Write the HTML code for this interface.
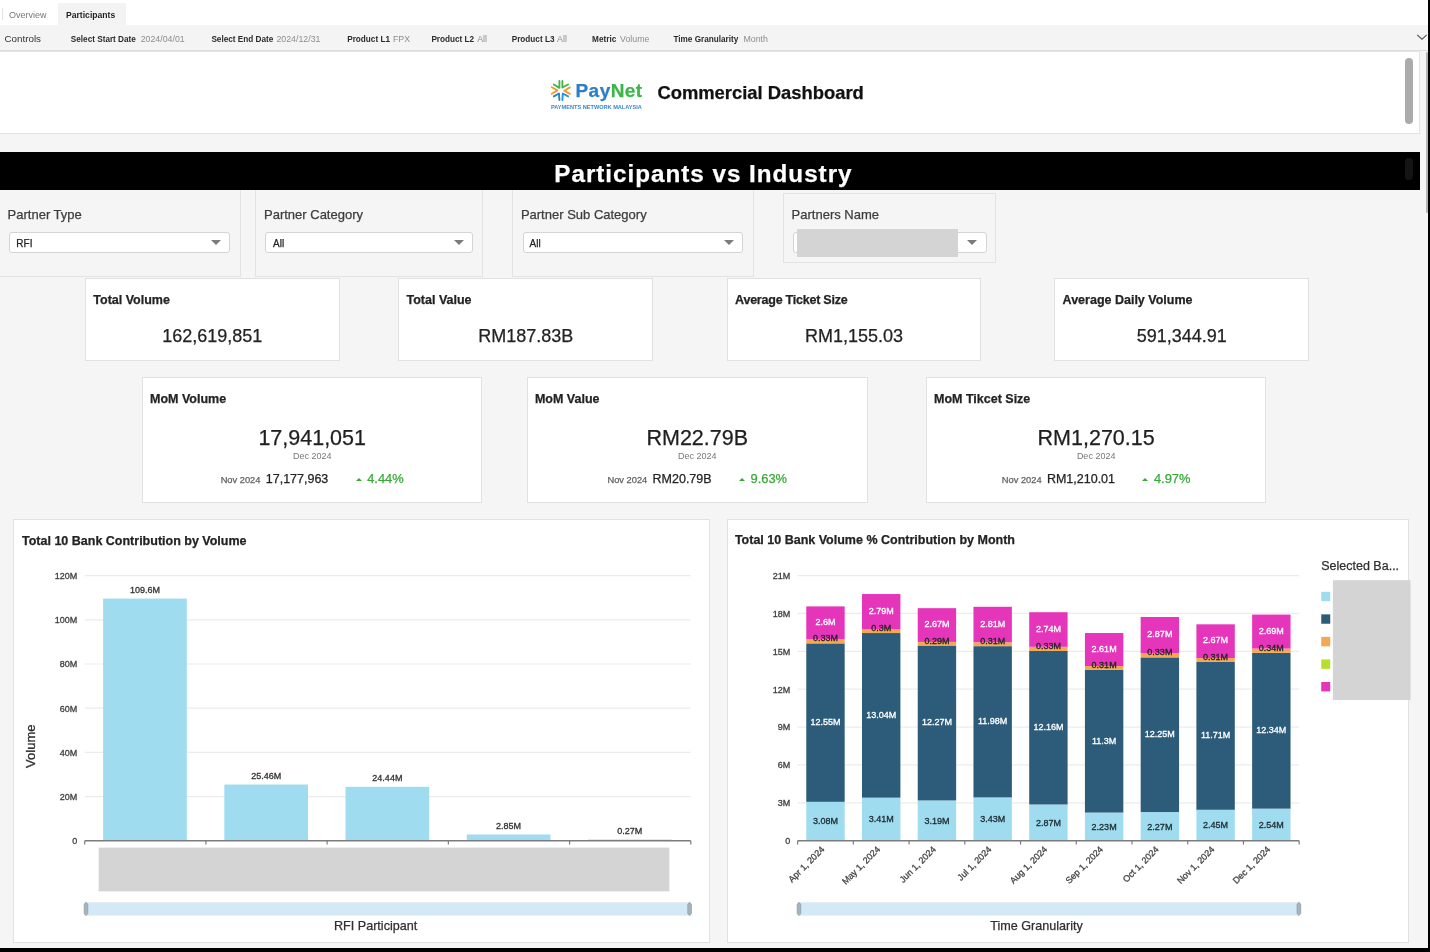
<!DOCTYPE html>
<html><head><meta charset="utf-8">
<style>
*{box-sizing:border-box;margin:0;padding:0}
html,body{width:1430px;height:952px;overflow:hidden;background:#000}
body{font-family:"Liberation Sans",sans-serif;color:#16191f;position:relative}
.a{position:absolute}
.t{white-space:nowrap;-webkit-text-stroke:0.25px currentColor}
.ns{-webkit-text-stroke:0}
#page{position:absolute;left:0;top:0;width:1428px;height:948px;background:#f5f5f5;overflow:hidden;will-change:transform}
.card{background:#fff;border:1px solid #e1e1e1}
.fp{background:#f5f5f5;border:1px solid #e3e3e3}
.dd{background:#fff;border:1px solid #d2d2d2;border-radius:3px}
</style></head><body>
<div id="page">

<div class="a" style="left:0.00px;top:0.00px;width:1428.00px;height:25.00px;background:#fff"></div>
<div class="a" style="left:2.00px;top:8.00px;width:1.00px;height:12.00px;background:#e4e4e4"></div>
<div class="a t ns" style="left:9.00px;top:10.68px;font-size:9px;line-height:9px;font-weight:400;color:#777;">Overview</div>
<div class="a" style="left:58.00px;top:3.00px;width:68.00px;height:22.00px;background:#f3f3f3"></div>
<div class="a t ns" style="left:66.00px;top:11.02px;font-size:8.6px;line-height:8.6px;font-weight:700;color:#1f1f1f;">Participants</div>
<div class="a" style="left:0.00px;top:25.00px;width:1428.00px;height:26.00px;background:#f4f4f4;border-bottom:1px solid #dedede"></div>
<div class="a t ns" style="left:4.50px;top:33.80px;font-size:9.8px;line-height:9.8px;font-weight:400;color:#333;">Controls</div>
<div class="a t ns" style="left:70.80px;top:36.06px;font-size:8.2px;line-height:8.2px;font-weight:700;color:#2a2a2a;">Select Start Date</div>
<div class="a t ns" style="left:140.70px;top:34.75px;font-size:8.8px;line-height:8.8px;font-weight:400;color:#8d8d8d;">2024/04/01</div>
<div class="a t ns" style="left:211.40px;top:36.06px;font-size:8.2px;line-height:8.2px;font-weight:700;color:#2a2a2a;">Select End Date</div>
<div class="a t ns" style="left:276.40px;top:34.75px;font-size:8.8px;line-height:8.8px;font-weight:400;color:#8d8d8d;">2024/12/31</div>
<div class="a t ns" style="left:347.20px;top:36.06px;font-size:8.2px;line-height:8.2px;font-weight:700;color:#2a2a2a;">Product L1</div>
<div class="a t ns" style="left:393.00px;top:34.75px;font-size:8.8px;line-height:8.8px;font-weight:400;color:#8d8d8d;">FPX</div>
<div class="a t ns" style="left:431.40px;top:36.06px;font-size:8.2px;line-height:8.2px;font-weight:700;color:#2a2a2a;">Product L2</div>
<div class="a t ns" style="left:477.20px;top:34.75px;font-size:8.8px;line-height:8.8px;font-weight:400;color:#8d8d8d;">All</div>
<div class="a t ns" style="left:511.70px;top:36.06px;font-size:8.2px;line-height:8.2px;font-weight:700;color:#2a2a2a;">Product L3</div>
<div class="a t ns" style="left:557.10px;top:34.75px;font-size:8.8px;line-height:8.8px;font-weight:400;color:#8d8d8d;">All</div>
<div class="a t ns" style="left:592.10px;top:36.06px;font-size:8.2px;line-height:8.2px;font-weight:700;color:#2a2a2a;">Metric</div>
<div class="a t ns" style="left:620.10px;top:34.75px;font-size:8.8px;line-height:8.8px;font-weight:400;color:#8d8d8d;">Volume</div>
<div class="a t ns" style="left:673.40px;top:36.06px;font-size:8.2px;line-height:8.2px;font-weight:700;color:#2a2a2a;">Time Granularity</div>
<div class="a t ns" style="left:743.50px;top:34.75px;font-size:8.8px;line-height:8.8px;font-weight:400;color:#8d8d8d;">Month</div>
<svg class="a" style="left:1415.5px;top:33px" width="12" height="8" viewBox="0 0 12 8"><path d="M1.2 1.8 L6 6.2 L10.8 1.8" fill="none" stroke="#555" stroke-width="1.1"/></svg>
<div class="a" style="left:-2.00px;top:51.00px;width:1421.50px;height:83.00px;background:#fff;border:1px solid #e3e3e3"></div>
<div class="a" style="left:1405.00px;top:58.30px;width:7.70px;height:65.80px;background:#ababab;border-radius:4px"></div>
<svg class="a" style="left:547px;top:77px" width="28" height="26" viewBox="0 0 28 26" fill="none" stroke-width="1.9" stroke-linecap="round" stroke-linejoin="round"><polyline points="12.4,4 12.4,10.9 6.8,7.5" stroke="#45b549"/><polyline points="15.4,4 15.4,10.5 21.1,7.5" stroke="#45b549"/><polyline points="4.8,10.2 10.4,13.4 4.8,16.7" stroke="#f39a2c"/><polyline points="22.9,10.4 17.3,13.7 22.9,16.8" stroke="#f39a2c"/><polyline points="6.8,19.4 12,16.5 12.4,23" stroke="#2782c8"/><polyline points="15.4,23 15.8,16.5 21.1,19.4" stroke="#2d95d0"/></svg>
<div class="a t" style="left:575.50px;top:80.82px;font-size:19px;line-height:19px;font-weight:700;color:#222;letter-spacing:0.45px"><span style="color:#2c7ec8">Pay</span><span style="color:#3db54a">Net</span></div>
<div class="a t ns" style="left:551.00px;top:104.56px;font-size:5.6px;line-height:5.6px;font-weight:700;color:#3b86cc;">PAYMENTS NETWORK MALAYSIA</div>
<div class="a t" style="left:657.40px;top:83.82px;font-size:18.4px;line-height:18.4px;font-weight:700;color:#111;">Commercial Dashboard</div>
<div class="a" style="left:0.00px;top:151.50px;width:1419.50px;height:38.80px;background:#000"></div>
<div class="a" style="left:1405.00px;top:158.00px;width:7.50px;height:22.00px;background:#141414;border-radius:4px"></div>
<div class="a t" style="left:554.30px;top:162.01px;font-size:24.2px;line-height:24.2px;font-weight:700;color:#fff;letter-spacing:1px">Participants vs Industry</div>
<div class="a" style="left:-2.00px;top:190.00px;width:243.00px;height:87.00px;background:#f5f5f5;border:1px solid #e3e3e3;border-top:none"></div>
<div class="a" style="left:255.00px;top:190.00px;width:228.00px;height:87.00px;background:#f5f5f5;border:1px solid #e3e3e3;border-top:none"></div>
<div class="a" style="left:512.00px;top:190.00px;width:242.00px;height:87.00px;background:#f5f5f5;border:1px solid #e3e3e3;border-top:none"></div>
<div class="a" style="left:783.00px;top:192.50px;width:213.00px;height:70.50px;background:#f5f5f5;border:1px solid #e3e3e3"></div>
<div class="a t" style="left:7.60px;top:208.00px;font-size:13px;line-height:13px;font-weight:400;color:#3d3d3d;">Partner Type</div>
<div class="a" style="left:9.20px;top:232.00px;width:221.30px;height:21.00px;background:#fff;border:1px solid #d4d4d4;border-radius:3px"></div>
<div class="a t" style="left:16.30px;top:238.63px;font-size:10px;line-height:10px;font-weight:400;color:#222;">RFI</div>
<div class="a" style="left:211.00px;top:239.80px;width:0;height:0;border-left:5px solid transparent;border-right:5px solid transparent;border-top:5px solid #7b7b7b"></div>
<div class="a t" style="left:264.00px;top:208.00px;font-size:13px;line-height:13px;font-weight:400;color:#3d3d3d;">Partner Category</div>
<div class="a" style="left:265.00px;top:232.00px;width:208.00px;height:21.00px;background:#fff;border:1px solid #d4d4d4;border-radius:3px"></div>
<div class="a t" style="left:273.00px;top:238.63px;font-size:10px;line-height:10px;font-weight:400;color:#222;">All</div>
<div class="a" style="left:453.50px;top:239.80px;width:0;height:0;border-left:5px solid transparent;border-right:5px solid transparent;border-top:5px solid #7b7b7b"></div>
<div class="a t" style="left:520.90px;top:208.00px;font-size:13px;line-height:13px;font-weight:400;color:#3d3d3d;">Partner Sub Category</div>
<div class="a" style="left:522.70px;top:232.00px;width:220.80px;height:21.00px;background:#fff;border:1px solid #d4d4d4;border-radius:3px"></div>
<div class="a t" style="left:529.60px;top:238.63px;font-size:10px;line-height:10px;font-weight:400;color:#222;">All</div>
<div class="a" style="left:724.00px;top:239.80px;width:0;height:0;border-left:5px solid transparent;border-right:5px solid transparent;border-top:5px solid #7b7b7b"></div>
<div class="a t" style="left:791.60px;top:208.00px;font-size:13px;line-height:13px;font-weight:400;color:#3d3d3d;">Partners Name</div>
<div class="a" style="left:793.00px;top:232.00px;width:193.50px;height:21.00px;background:#fff;border:1px solid #d4d4d4;border-radius:3px"></div>
<div class="a" style="left:797.00px;top:228.50px;width:160.80px;height:28.40px;background:#d4d4d4"></div>
<div class="a" style="left:967.00px;top:239.80px;width:0;height:0;border-left:5px solid transparent;border-right:5px solid transparent;border-top:5px solid #7b7b7b"></div>
<div class="a" style="left:85.00px;top:278.20px;width:254.50px;height:82.90px;background:#fff;border:1px solid #e1e1e1"></div>
<div class="a t" style="left:93.30px;top:293.72px;font-size:12.5px;line-height:12.5px;font-weight:700;color:#232323;">Total Volume</div>
<div class="a t" style="left:-187.75px;width:800px;text-align:center;top:327.26px;font-size:18px;line-height:18px;font-weight:400;color:#232323;">162,619,851</div>
<div class="a" style="left:398.20px;top:278.20px;width:255.00px;height:82.90px;background:#fff;border:1px solid #e1e1e1"></div>
<div class="a t" style="left:406.50px;top:293.72px;font-size:12.5px;line-height:12.5px;font-weight:700;color:#232323;">Total Value</div>
<div class="a t" style="left:125.70px;width:800px;text-align:center;top:327.26px;font-size:18px;line-height:18px;font-weight:400;color:#232323;">RM187.83B</div>
<div class="a" style="left:726.80px;top:278.20px;width:254.40px;height:82.90px;background:#fff;border:1px solid #e1e1e1"></div>
<div class="a t" style="left:735.10px;top:293.72px;font-size:12.5px;line-height:12.5px;font-weight:700;color:#232323;letter-spacing:-0.23px">Average Ticket Size</div>
<div class="a t" style="left:454.00px;width:800px;text-align:center;top:327.26px;font-size:18px;line-height:18px;font-weight:400;color:#232323;">RM1,155.03</div>
<div class="a" style="left:1054.30px;top:278.20px;width:255.10px;height:82.90px;background:#fff;border:1px solid #e1e1e1"></div>
<div class="a t" style="left:1062.60px;top:293.72px;font-size:12.5px;line-height:12.5px;font-weight:700;color:#232323;">Average Daily Volume</div>
<div class="a t" style="left:781.85px;width:800px;text-align:center;top:327.26px;font-size:18px;line-height:18px;font-weight:400;color:#232323;">591,344.91</div>
<div class="a" style="left:142.00px;top:377.00px;width:340.40px;height:126.40px;background:#fff;border:1px solid #e1e1e1"></div>
<div class="a t" style="left:150.00px;top:393.42px;font-size:12.5px;line-height:12.5px;font-weight:700;color:#232323;">MoM Volume</div>
<div class="a t" style="left:-87.80px;width:800px;text-align:center;top:427.80px;font-size:21.5px;line-height:21.5px;font-weight:400;color:#1f1f1f;">17,941,051</div>
<div class="a t ns" style="left:-87.80px;width:800px;text-align:center;top:452.18px;font-size:9px;line-height:9px;font-weight:400;color:#777;">Dec 2024</div>
<div class="a t" style="left:-87.80px;width:800px;top:473.22px;height:14px;display:flex;justify-content:center;align-items:baseline;line-height:12.5px"><span style="font-size:9.3px;color:#616161">Nov 2024</span><span style="font-size:12.5px;color:#232323;margin-left:5.3px">17,177,963</span><span style="display:inline-block;width:0;height:0;border-left:3.7px solid transparent;border-right:3.7px solid transparent;border-bottom:3.3px solid #37a936;margin-left:27.3px;margin-right:5.6px;position:relative;top:-2.6px"></span><span style="font-size:12.9px;color:#37a936">4.44%</span></div>
<div class="a" style="left:526.90px;top:377.00px;width:340.70px;height:126.40px;background:#fff;border:1px solid #e1e1e1"></div>
<div class="a t" style="left:534.90px;top:393.42px;font-size:12.5px;line-height:12.5px;font-weight:700;color:#232323;">MoM Value</div>
<div class="a t" style="left:297.25px;width:800px;text-align:center;top:427.80px;font-size:21.5px;line-height:21.5px;font-weight:400;color:#1f1f1f;">RM22.79B</div>
<div class="a t ns" style="left:297.25px;width:800px;text-align:center;top:452.18px;font-size:9px;line-height:9px;font-weight:400;color:#777;">Dec 2024</div>
<div class="a t" style="left:297.25px;width:800px;top:473.22px;height:14px;display:flex;justify-content:center;align-items:baseline;line-height:12.5px"><span style="font-size:9.3px;color:#616161">Nov 2024</span><span style="font-size:12.5px;color:#232323;margin-left:5.3px">RM20.79B</span><span style="display:inline-block;width:0;height:0;border-left:3.7px solid transparent;border-right:3.7px solid transparent;border-bottom:3.3px solid #37a936;margin-left:27.3px;margin-right:5.6px;position:relative;top:-2.6px"></span><span style="font-size:12.9px;color:#37a936">9.63%</span></div>
<div class="a" style="left:926.00px;top:377.00px;width:340.30px;height:126.40px;background:#fff;border:1px solid #e1e1e1"></div>
<div class="a t" style="left:934.00px;top:393.42px;font-size:12.5px;line-height:12.5px;font-weight:700;color:#232323;">MoM Tikcet Size</div>
<div class="a t" style="left:696.15px;width:800px;text-align:center;top:427.80px;font-size:21.5px;line-height:21.5px;font-weight:400;color:#1f1f1f;">RM1,270.15</div>
<div class="a t ns" style="left:696.15px;width:800px;text-align:center;top:452.18px;font-size:9px;line-height:9px;font-weight:400;color:#777;">Dec 2024</div>
<div class="a t" style="left:696.15px;width:800px;top:473.22px;height:14px;display:flex;justify-content:center;align-items:baseline;line-height:12.5px"><span style="font-size:9.3px;color:#616161">Nov 2024</span><span style="font-size:12.5px;color:#232323;margin-left:5.3px">RM1,210.01</span><span style="display:inline-block;width:0;height:0;border-left:3.7px solid transparent;border-right:3.7px solid transparent;border-bottom:3.3px solid #37a936;margin-left:27.3px;margin-right:5.6px;position:relative;top:-2.6px"></span><span style="font-size:12.9px;color:#37a936">4.97%</span></div>
<div class="a" style="left:13.40px;top:518.60px;width:696.80px;height:424.60px;background:#fff;border:1px solid #e1e1e1"></div>
<div class="a" style="left:726.80px;top:518.60px;width:682.40px;height:424.60px;background:#fff;border:1px solid #e1e1e1"></div>
<div class="a t" style="left:22.00px;top:534.92px;font-size:12.5px;line-height:12.5px;font-weight:700;color:#232323;">Total 10 Bank Contribution by Volume</div>
<div class="a t" style="left:-24.40px;width:800px;text-align:center;top:920.03px;font-size:12.6px;line-height:12.6px;font-weight:400;color:#2f2f2f;">RFI Participant</div>
<div class="a t" style="left:734.90px;top:534.22px;font-size:12.5px;line-height:12.5px;font-weight:700;color:#232323;">Total 10 Bank Volume % Contribution by Month</div>
<div class="a t" style="left:636.60px;width:800px;text-align:center;top:920.23px;font-size:12.6px;line-height:12.6px;font-weight:400;color:#2f2f2f;">Time Granularity</div>
<div class="a t" style="left:1321.25px;top:559.62px;font-size:12.5px;line-height:12.5px;font-weight:400;color:#2f2f2f;">Selected Ba...</div>
<svg class="a" style="left:0;top:0" width="1428" height="948" viewBox="0 0 1428 948" font-family="Liberation Sans, sans-serif">
<text x="77.2" y="844.10" font-size="9" fill="#3f3f3f" stroke="#3f3f3f" stroke-width="0.3" text-anchor="end">0</text>
<line x1="84.7" y1="796.60" x2="690.8" y2="796.60" stroke="#ececec" stroke-width="1.2"/>
<text x="77.2" y="799.90" font-size="9" fill="#3f3f3f" stroke="#3f3f3f" stroke-width="0.3" text-anchor="end">20M</text>
<line x1="84.7" y1="752.40" x2="690.8" y2="752.40" stroke="#ececec" stroke-width="1.2"/>
<text x="77.2" y="755.70" font-size="9" fill="#3f3f3f" stroke="#3f3f3f" stroke-width="0.3" text-anchor="end">40M</text>
<line x1="84.7" y1="708.20" x2="690.8" y2="708.20" stroke="#ececec" stroke-width="1.2"/>
<text x="77.2" y="711.50" font-size="9" fill="#3f3f3f" stroke="#3f3f3f" stroke-width="0.3" text-anchor="end">60M</text>
<line x1="84.7" y1="664.00" x2="690.8" y2="664.00" stroke="#ececec" stroke-width="1.2"/>
<text x="77.2" y="667.30" font-size="9" fill="#3f3f3f" stroke="#3f3f3f" stroke-width="0.3" text-anchor="end">80M</text>
<line x1="84.7" y1="619.80" x2="690.8" y2="619.80" stroke="#ececec" stroke-width="1.2"/>
<text x="77.2" y="623.10" font-size="9" fill="#3f3f3f" stroke="#3f3f3f" stroke-width="0.3" text-anchor="end">100M</text>
<line x1="84.7" y1="575.60" x2="690.8" y2="575.60" stroke="#ececec" stroke-width="1.2"/>
<text x="77.2" y="578.90" font-size="9" fill="#3f3f3f" stroke="#3f3f3f" stroke-width="0.3" text-anchor="end">120M</text>
<rect x="103.10" y="598.58" width="83.7" height="242.22" fill="#9fdcef"/>
<text x="144.95" y="593.08" font-size="9" fill="#333" stroke="#333" stroke-width="0.3" text-anchor="middle">109.6M</text>
<rect x="224.32" y="784.53" width="83.7" height="56.27" fill="#9fdcef"/>
<text x="266.17" y="779.03" font-size="9" fill="#333" stroke="#333" stroke-width="0.3" text-anchor="middle">25.46M</text>
<rect x="345.54" y="786.79" width="83.7" height="54.01" fill="#9fdcef"/>
<text x="387.39" y="781.29" font-size="9" fill="#333" stroke="#333" stroke-width="0.3" text-anchor="middle">24.44M</text>
<rect x="466.76" y="834.50" width="83.7" height="6.30" fill="#9fdcef"/>
<text x="508.61" y="829.00" font-size="9" fill="#333" stroke="#333" stroke-width="0.3" text-anchor="middle">2.85M</text>
<rect x="587.98" y="839.80" width="83.7" height="1.00" fill="#5f9fb0"/>
<text x="629.83" y="834.30" font-size="9" fill="#333" stroke="#333" stroke-width="0.3" text-anchor="middle">0.27M</text>
<line x1="84.7" y1="840.8" x2="690.8" y2="840.8" stroke="#7c7c7c" stroke-width="1.6"/>
<line x1="84.70" y1="840.8" x2="84.70" y2="844.6" stroke="#7c7c7c" stroke-width="1.2"/>
<line x1="205.92" y1="840.8" x2="205.92" y2="844.6" stroke="#7c7c7c" stroke-width="1.2"/>
<line x1="327.14" y1="840.8" x2="327.14" y2="844.6" stroke="#7c7c7c" stroke-width="1.2"/>
<line x1="448.36" y1="840.8" x2="448.36" y2="844.6" stroke="#7c7c7c" stroke-width="1.2"/>
<line x1="569.58" y1="840.8" x2="569.58" y2="844.6" stroke="#7c7c7c" stroke-width="1.2"/>
<line x1="690.80" y1="840.8" x2="690.80" y2="844.6" stroke="#7c7c7c" stroke-width="1.2"/>
<rect x="98.7" y="847.6" width="570.70" height="43.80" fill="#d4d4d4"/>
<rect x="84.7" y="902.3" width="606.10" height="13.3" fill="#d3e9f5"/>
<polygon points="84.20,904.3 86.00,902.2 87.80,904.3 87.80,913.5 86.00,915.6 84.20,913.5" fill="#a6b5bd" stroke="#8c999f" stroke-width="0.7"/>
<polygon points="687.80,904.3 689.60,902.2 691.40,904.3 691.40,913.5 689.60,915.6 687.80,913.5" fill="#a6b5bd" stroke="#8c999f" stroke-width="0.7"/>
<text x="0" y="0" font-size="13" fill="#2f2f2f" stroke="#2f2f2f" stroke-width="0.3" text-anchor="middle" transform="translate(35.3,746.2) rotate(-90)">Volume</text>
<text x="790.2" y="844.00" font-size="9" fill="#3f3f3f" stroke="#3f3f3f" stroke-width="0.3" text-anchor="end">0</text>
<line x1="797.6" y1="802.83" x2="1299.2" y2="802.83" stroke="#ececec" stroke-width="1.2"/>
<text x="790.2" y="806.13" font-size="9" fill="#3f3f3f" stroke="#3f3f3f" stroke-width="0.3" text-anchor="end">3M</text>
<line x1="797.6" y1="764.96" x2="1299.2" y2="764.96" stroke="#ececec" stroke-width="1.2"/>
<text x="790.2" y="768.26" font-size="9" fill="#3f3f3f" stroke="#3f3f3f" stroke-width="0.3" text-anchor="end">6M</text>
<line x1="797.6" y1="727.09" x2="1299.2" y2="727.09" stroke="#ececec" stroke-width="1.2"/>
<text x="790.2" y="730.39" font-size="9" fill="#3f3f3f" stroke="#3f3f3f" stroke-width="0.3" text-anchor="end">9M</text>
<line x1="797.6" y1="689.21" x2="1299.2" y2="689.21" stroke="#ececec" stroke-width="1.2"/>
<text x="790.2" y="692.51" font-size="9" fill="#3f3f3f" stroke="#3f3f3f" stroke-width="0.3" text-anchor="end">12M</text>
<line x1="797.6" y1="651.34" x2="1299.2" y2="651.34" stroke="#ececec" stroke-width="1.2"/>
<text x="790.2" y="654.64" font-size="9" fill="#3f3f3f" stroke="#3f3f3f" stroke-width="0.3" text-anchor="end">15M</text>
<line x1="797.6" y1="613.47" x2="1299.2" y2="613.47" stroke="#ececec" stroke-width="1.2"/>
<text x="790.2" y="616.77" font-size="9" fill="#3f3f3f" stroke="#3f3f3f" stroke-width="0.3" text-anchor="end">18M</text>
<line x1="797.6" y1="575.60" x2="1299.2" y2="575.60" stroke="#ececec" stroke-width="1.2"/>
<text x="790.2" y="578.90" font-size="9" fill="#3f3f3f" stroke="#3f3f3f" stroke-width="0.3" text-anchor="end">21M</text>
<rect x="806.27" y="801.82" width="38.4" height="38.88" fill="#9fdcef"/>
<rect x="806.27" y="643.39" width="38.4" height="158.43" fill="#2c5c7a"/>
<rect x="806.27" y="639.22" width="38.4" height="4.17" fill="#f4a853"/>
<rect x="806.27" y="606.40" width="38.4" height="32.82" fill="#e535ba"/>
<text x="825.47" y="824.46" font-size="9" fill="#1e2a30" stroke="#1e2a30" stroke-width="0.3" text-anchor="middle">3.08M</text>
<text x="825.47" y="724.90" font-size="9" fill="#fff" stroke="#fff" stroke-width="0.3" text-anchor="middle">12.55M</text>
<text x="825.47" y="641.11" font-size="9" fill="#222" stroke="#222" stroke-width="0.3" text-anchor="middle">0.33M</text>
<text x="825.47" y="625.11" font-size="9" fill="#fff" stroke="#fff" stroke-width="0.3" text-anchor="middle">2.6M</text>
<text x="0" y="0" font-size="9" fill="#444" stroke="#444" stroke-width="0.3" text-anchor="end" transform="translate(824.97,850.00) rotate(-45)">Apr 1, 2024</text>
<rect x="862.00" y="797.65" width="38.4" height="43.05" fill="#9fdcef"/>
<rect x="862.00" y="633.04" width="38.4" height="164.61" fill="#2c5c7a"/>
<rect x="862.00" y="629.25" width="38.4" height="3.79" fill="#f4a853"/>
<rect x="862.00" y="594.03" width="38.4" height="35.22" fill="#e535ba"/>
<text x="881.20" y="822.38" font-size="9" fill="#1e2a30" stroke="#1e2a30" stroke-width="0.3" text-anchor="middle">3.41M</text>
<text x="881.20" y="717.65" font-size="9" fill="#fff" stroke="#fff" stroke-width="0.3" text-anchor="middle">13.04M</text>
<text x="881.20" y="630.94" font-size="9" fill="#222" stroke="#222" stroke-width="0.3" text-anchor="middle">0.3M</text>
<text x="881.20" y="613.94" font-size="9" fill="#fff" stroke="#fff" stroke-width="0.3" text-anchor="middle">2.79M</text>
<text x="0" y="0" font-size="9" fill="#444" stroke="#444" stroke-width="0.3" text-anchor="end" transform="translate(880.70,850.00) rotate(-45)">May 1, 2024</text>
<rect x="917.73" y="800.43" width="38.4" height="40.27" fill="#9fdcef"/>
<rect x="917.73" y="645.54" width="38.4" height="154.89" fill="#2c5c7a"/>
<rect x="917.73" y="641.87" width="38.4" height="3.66" fill="#f4a853"/>
<rect x="917.73" y="608.17" width="38.4" height="33.71" fill="#e535ba"/>
<text x="936.93" y="823.77" font-size="9" fill="#1e2a30" stroke="#1e2a30" stroke-width="0.3" text-anchor="middle">3.19M</text>
<text x="936.93" y="725.28" font-size="9" fill="#fff" stroke="#fff" stroke-width="0.3" text-anchor="middle">12.27M</text>
<text x="936.93" y="643.51" font-size="9" fill="#222" stroke="#222" stroke-width="0.3" text-anchor="middle">0.29M</text>
<text x="936.93" y="627.32" font-size="9" fill="#fff" stroke="#fff" stroke-width="0.3" text-anchor="middle">2.67M</text>
<text x="0" y="0" font-size="9" fill="#444" stroke="#444" stroke-width="0.3" text-anchor="end" transform="translate(936.43,850.00) rotate(-45)">Jun 1, 2024</text>
<rect x="973.47" y="797.40" width="38.4" height="43.30" fill="#9fdcef"/>
<rect x="973.47" y="646.17" width="38.4" height="151.23" fill="#2c5c7a"/>
<rect x="973.47" y="642.25" width="38.4" height="3.91" fill="#f4a853"/>
<rect x="973.47" y="606.78" width="38.4" height="35.47" fill="#e535ba"/>
<text x="992.67" y="822.25" font-size="9" fill="#1e2a30" stroke="#1e2a30" stroke-width="0.3" text-anchor="middle">3.43M</text>
<text x="992.67" y="724.08" font-size="9" fill="#fff" stroke="#fff" stroke-width="0.3" text-anchor="middle">11.98M</text>
<text x="992.67" y="644.01" font-size="9" fill="#222" stroke="#222" stroke-width="0.3" text-anchor="middle">0.31M</text>
<text x="992.67" y="626.82" font-size="9" fill="#fff" stroke="#fff" stroke-width="0.3" text-anchor="middle">2.81M</text>
<text x="0" y="0" font-size="9" fill="#444" stroke="#444" stroke-width="0.3" text-anchor="end" transform="translate(992.17,850.00) rotate(-45)">Jul 1, 2024</text>
<rect x="1029.20" y="804.47" width="38.4" height="36.23" fill="#9fdcef"/>
<rect x="1029.20" y="650.96" width="38.4" height="153.51" fill="#2c5c7a"/>
<rect x="1029.20" y="646.80" width="38.4" height="4.17" fill="#f4a853"/>
<rect x="1029.20" y="612.21" width="38.4" height="34.59" fill="#e535ba"/>
<text x="1048.40" y="825.78" font-size="9" fill="#1e2a30" stroke="#1e2a30" stroke-width="0.3" text-anchor="middle">2.87M</text>
<text x="1048.40" y="730.02" font-size="9" fill="#fff" stroke="#fff" stroke-width="0.3" text-anchor="middle">12.16M</text>
<text x="1048.40" y="648.68" font-size="9" fill="#222" stroke="#222" stroke-width="0.3" text-anchor="middle">0.33M</text>
<text x="1048.40" y="631.80" font-size="9" fill="#fff" stroke="#fff" stroke-width="0.3" text-anchor="middle">2.74M</text>
<text x="0" y="0" font-size="9" fill="#444" stroke="#444" stroke-width="0.3" text-anchor="end" transform="translate(1047.90,850.00) rotate(-45)">Aug 1, 2024</text>
<rect x="1084.93" y="812.55" width="38.4" height="28.15" fill="#9fdcef"/>
<rect x="1084.93" y="669.90" width="38.4" height="142.65" fill="#2c5c7a"/>
<rect x="1084.93" y="665.99" width="38.4" height="3.91" fill="#f4a853"/>
<rect x="1084.93" y="633.04" width="38.4" height="32.95" fill="#e535ba"/>
<text x="1104.13" y="829.82" font-size="9" fill="#1e2a30" stroke="#1e2a30" stroke-width="0.3" text-anchor="middle">2.23M</text>
<text x="1104.13" y="743.52" font-size="9" fill="#fff" stroke="#fff" stroke-width="0.3" text-anchor="middle">11.3M</text>
<text x="1104.13" y="667.74" font-size="9" fill="#222" stroke="#222" stroke-width="0.3" text-anchor="middle">0.31M</text>
<text x="1104.13" y="651.81" font-size="9" fill="#fff" stroke="#fff" stroke-width="0.3" text-anchor="middle">2.61M</text>
<text x="0" y="0" font-size="9" fill="#444" stroke="#444" stroke-width="0.3" text-anchor="end" transform="translate(1103.63,850.00) rotate(-45)">Sep 1, 2024</text>
<rect x="1140.67" y="812.04" width="38.4" height="28.66" fill="#9fdcef"/>
<rect x="1140.67" y="657.40" width="38.4" height="154.64" fill="#2c5c7a"/>
<rect x="1140.67" y="653.24" width="38.4" height="4.17" fill="#f4a853"/>
<rect x="1140.67" y="617.01" width="38.4" height="36.23" fill="#e535ba"/>
<text x="1159.87" y="829.57" font-size="9" fill="#1e2a30" stroke="#1e2a30" stroke-width="0.3" text-anchor="middle">2.27M</text>
<text x="1159.87" y="737.02" font-size="9" fill="#fff" stroke="#fff" stroke-width="0.3" text-anchor="middle">12.25M</text>
<text x="1159.87" y="655.12" font-size="9" fill="#222" stroke="#222" stroke-width="0.3" text-anchor="middle">0.33M</text>
<text x="1159.87" y="637.42" font-size="9" fill="#fff" stroke="#fff" stroke-width="0.3" text-anchor="middle">2.87M</text>
<text x="0" y="0" font-size="9" fill="#444" stroke="#444" stroke-width="0.3" text-anchor="end" transform="translate(1159.37,850.00) rotate(-45)">Oct 1, 2024</text>
<rect x="1196.40" y="809.77" width="38.4" height="30.93" fill="#9fdcef"/>
<rect x="1196.40" y="661.95" width="38.4" height="147.82" fill="#2c5c7a"/>
<rect x="1196.40" y="658.03" width="38.4" height="3.91" fill="#f4a853"/>
<rect x="1196.40" y="624.33" width="38.4" height="33.71" fill="#e535ba"/>
<text x="1215.60" y="828.44" font-size="9" fill="#1e2a30" stroke="#1e2a30" stroke-width="0.3" text-anchor="middle">2.45M</text>
<text x="1215.60" y="738.16" font-size="9" fill="#fff" stroke="#fff" stroke-width="0.3" text-anchor="middle">11.71M</text>
<text x="1215.60" y="659.79" font-size="9" fill="#222" stroke="#222" stroke-width="0.3" text-anchor="middle">0.31M</text>
<text x="1215.60" y="643.48" font-size="9" fill="#fff" stroke="#fff" stroke-width="0.3" text-anchor="middle">2.67M</text>
<text x="0" y="0" font-size="9" fill="#444" stroke="#444" stroke-width="0.3" text-anchor="end" transform="translate(1215.10,850.00) rotate(-45)">Nov 1, 2024</text>
<rect x="1252.13" y="808.64" width="38.4" height="32.06" fill="#9fdcef"/>
<rect x="1252.13" y="652.86" width="38.4" height="155.78" fill="#2c5c7a"/>
<rect x="1252.13" y="648.57" width="38.4" height="4.29" fill="#f4a853"/>
<rect x="1252.13" y="614.61" width="38.4" height="33.96" fill="#e535ba"/>
<text x="1271.33" y="827.87" font-size="9" fill="#1e2a30" stroke="#1e2a30" stroke-width="0.3" text-anchor="middle">2.54M</text>
<text x="1271.33" y="733.05" font-size="9" fill="#fff" stroke="#fff" stroke-width="0.3" text-anchor="middle">12.34M</text>
<text x="1271.33" y="650.51" font-size="9" fill="#222" stroke="#222" stroke-width="0.3" text-anchor="middle">0.34M</text>
<text x="1271.33" y="633.89" font-size="9" fill="#fff" stroke="#fff" stroke-width="0.3" text-anchor="middle">2.69M</text>
<text x="0" y="0" font-size="9" fill="#444" stroke="#444" stroke-width="0.3" text-anchor="end" transform="translate(1270.83,850.00) rotate(-45)">Dec 1, 2024</text>
<line x1="797.6" y1="840.7" x2="1299.2" y2="840.7" stroke="#7c7c7c" stroke-width="1.6"/>
<line x1="797.60" y1="840.7" x2="797.60" y2="844.6" stroke="#7c7c7c" stroke-width="1.2"/>
<line x1="853.33" y1="840.7" x2="853.33" y2="844.6" stroke="#7c7c7c" stroke-width="1.2"/>
<line x1="909.07" y1="840.7" x2="909.07" y2="844.6" stroke="#7c7c7c" stroke-width="1.2"/>
<line x1="964.80" y1="840.7" x2="964.80" y2="844.6" stroke="#7c7c7c" stroke-width="1.2"/>
<line x1="1020.53" y1="840.7" x2="1020.53" y2="844.6" stroke="#7c7c7c" stroke-width="1.2"/>
<line x1="1076.27" y1="840.7" x2="1076.27" y2="844.6" stroke="#7c7c7c" stroke-width="1.2"/>
<line x1="1132.00" y1="840.7" x2="1132.00" y2="844.6" stroke="#7c7c7c" stroke-width="1.2"/>
<line x1="1187.73" y1="840.7" x2="1187.73" y2="844.6" stroke="#7c7c7c" stroke-width="1.2"/>
<line x1="1243.47" y1="840.7" x2="1243.47" y2="844.6" stroke="#7c7c7c" stroke-width="1.2"/>
<line x1="1299.20" y1="840.7" x2="1299.20" y2="844.6" stroke="#7c7c7c" stroke-width="1.2"/>
<rect x="797.6" y="902.3" width="501.60" height="13.3" fill="#d3e9f5"/>
<polygon points="797.20,904.3 799.00,902.2 800.80,904.3 800.80,913.5 799.00,915.6 797.20,913.5" fill="#a6b5bd" stroke="#8c999f" stroke-width="0.7"/>
<polygon points="1297.10,904.3 1298.90,902.2 1300.70,904.3 1300.70,913.5 1298.90,915.6 1297.10,913.5" fill="#a6b5bd" stroke="#8c999f" stroke-width="0.7"/>
<rect x="1321.25" y="591.80" width="9" height="9.4" fill="#9fdcef"/>
<rect x="1321.25" y="614.35" width="9" height="9.4" fill="#2c5c7a"/>
<rect x="1321.25" y="636.90" width="9" height="9.4" fill="#f4a853"/>
<rect x="1321.25" y="659.45" width="9" height="9.4" fill="#b5e02d"/>
<rect x="1321.25" y="682.00" width="9" height="9.4" fill="#e535ba"/>
<rect x="1332.9" y="580.2" width="77.6" height="119.8" fill="#d4d4d4"/>
</svg>
<div class="a" style="left:1425.50px;top:52.30px;width:2.30px;height:160.70px;background:#b5b5b5;border-radius:1px"></div>
</div></body></html>
